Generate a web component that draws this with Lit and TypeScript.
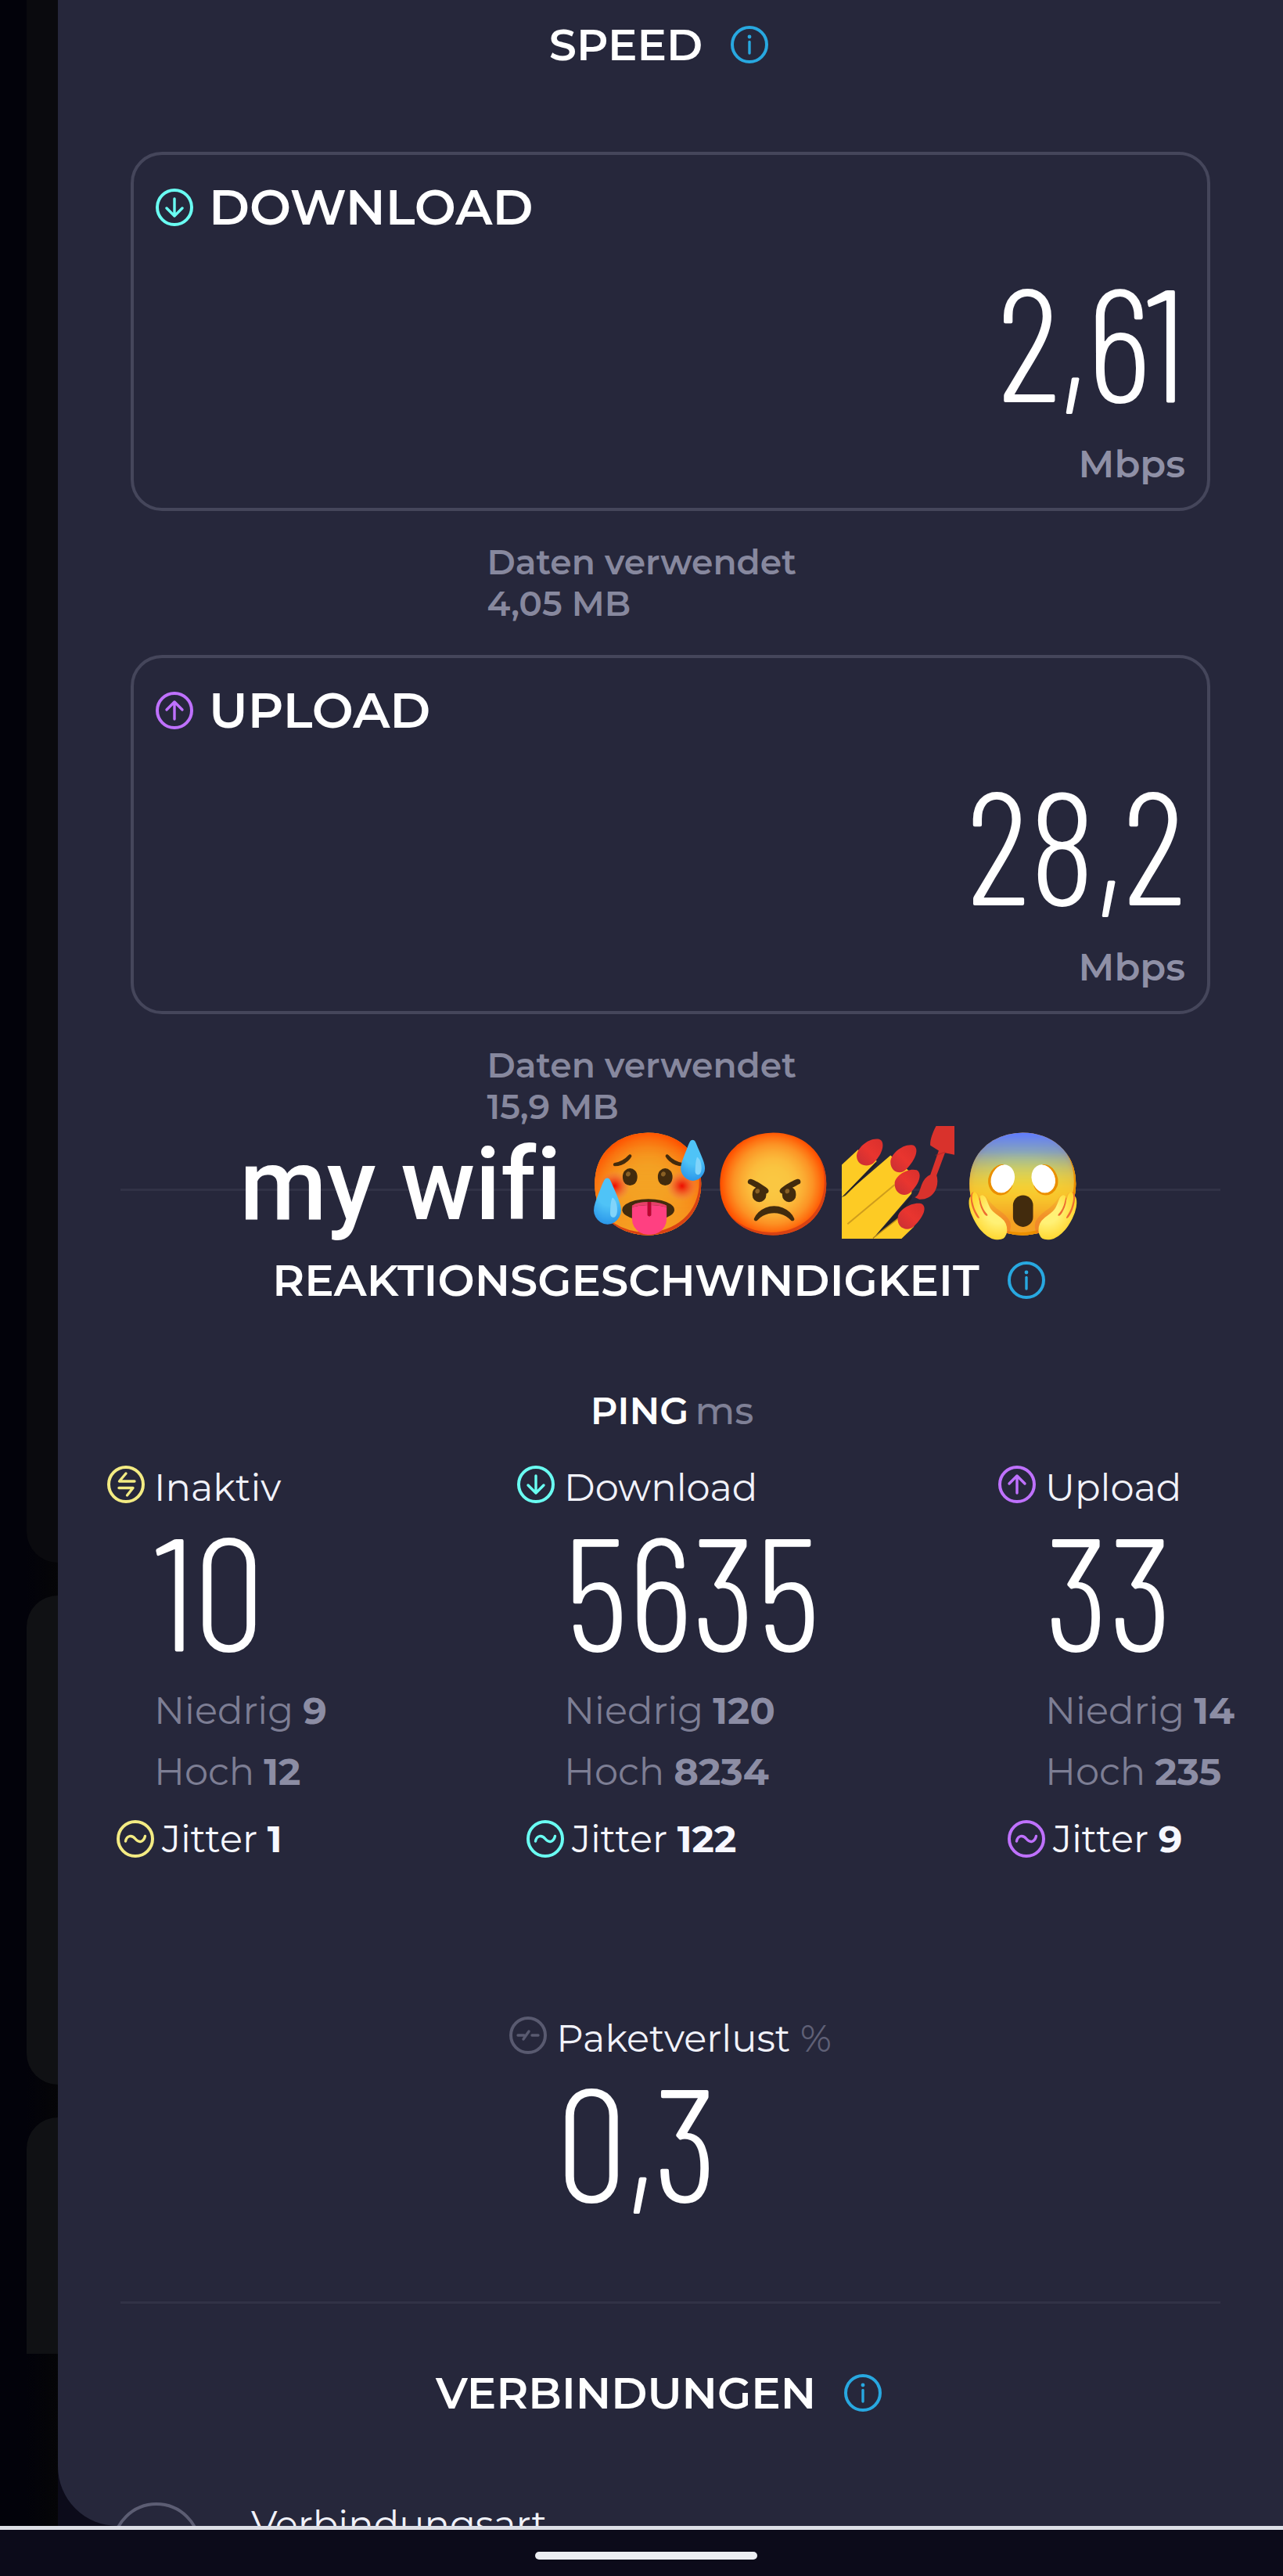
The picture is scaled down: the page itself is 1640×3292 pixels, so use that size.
import { LitElement, html, svg, css, nothing } from "lit";
import { customElement, property } from "lit/decorators.js";
import { classMap } from "lit/directives/class-map.js";

type Tone = "idle" | "down" | "up" | "muted" | "info";

const glyphs = {
  down: svg`<path d="M24 13V35M14 25L24 35L34 25" />`,
  up: svg`<path d="M24 35V13M14 23L24 13L34 23" />`,
  idle: svg`<path d="M24 10L15.5 20H35M15 28.5H33L25.5 38" />`,
  jitter: svg`<path d="M11.500 27C13 19.500 19.500 18.500 24 24S34.500 28.500 36.500 20.500" />`,
  loss: svg`<path d="M11 24H19M18 29L25 19M29 24H37" />`,
  info: svg`<path d="M24 20.500V35" /><circle class="dot" cx="24" cy="14" r="2.400" />`,
};

@customElement("ring-icon")
class RingIcon extends LitElement {
  static styles = css`
    :host { display: block; flex: none; width: 48px; height: 48px; }
    svg { display: block; width: 100%; height: 100%; fill: none; stroke-width: 3.4; stroke-linecap: round; stroke-linejoin: round; }
    .ring { stroke-width: 4; }
    .dot { stroke: none; }
    .idle { stroke: #f3eb83; }
    .down { stroke: #6afff3; }
    .up { stroke: #bf71ff; }
    .muted { stroke: #595a70; }
    .info { stroke: #28a8e0; fill: none; }
    .info .dot { fill: #28a8e0; }
  `;
  @property() glyph: keyof typeof glyphs = "info";
  @property() tone: Tone = "info";
  render() {
    return html`<svg viewBox="0 0 48 48" class=${this.tone} aria-hidden="true">
      <circle class="ring" cx="24" cy="24" r="22" />${glyphs[this.glyph]}
    </svg>`;
  }
}

@customElement("section-title")
class SectionTitle extends LitElement {
  static styles = css`
    :host { display: flex; align-items: center; justify-content: center; gap: 36px; padding-right: 30px; }
    h2 { margin: 0; font-size: 56px; line-height: 64px; font-weight: 600; }
    button { padding: 0; border: 0; background: none; border-radius: 50%; cursor: pointer; }
  `;
  @property() label = "";
  render() {
    return html`<h2>${this.label}</h2>
      <button type="button" aria-label="Info ${this.label}"><ring-icon glyph="info" tone="info"></ring-icon></button>`;
  }
}

@customElement("speed-card")
class SpeedCard extends LitElement {
  static styles = css`
    :host { display: block; margin: 0 93px; }
    .card { border: 4px solid #45465b; border-radius: 40px; padding: 31px 28px 28px; display: flex; flex-direction: column; gap: 32px; }
    .head { display: flex; align-items: center; gap: 20px; }
    h3 { margin: 0; font-size: 63px; line-height: 72px; font-weight: 600; }
    .value { font-family: "Barlow Condensed", "Open Sans Condensed Light", "Roboto", sans-serif; font-weight: 300; font-size: 204px; line-height: 200px; text-align: right; }
    .unit { font-size: 48px; line-height: 56px; font-weight: 600; color: #8f90a6; text-align: right; }
    .used { margin: 39px 0 0; padding-left: 33%; font-size: 44px; line-height: 53px; font-weight: 600; color: #87889e; }
    .used span { display: block; }
  `;
  @property() label = "";
  @property() glyph: "down" | "up" = "down";
  @property() value = "";
  @property() used = "";
  render() {
    return html`<div class="card">
        <div class="head"><ring-icon glyph=${this.glyph} tone=${this.glyph}></ring-icon><h3>${this.label}</h3></div>
        <div class="value">${this.value}</div>
        <div class="unit">Mbps</div>
      </div>
      <p class="used"><span>Daten verwendet</span><span>${this.used}</span></p>`;
  }
}

interface Ping { tone: "idle" | "down" | "up"; label: string; value: string; low: string; high: string; jitter: string; }

@customElement("ping-stat")
class PingStat extends LitElement {
  static styles = css`
    :host { display: block; font-size: 48px; line-height: 56px; white-space: nowrap; }
    .head { display: flex; gap: 12px; color: #f1f2fa; }
    .unit { color: #5f6076; }
    .value { padding-left: 60px; font-family: "Barlow Condensed", "Open Sans Condensed Light", "Roboto", sans-serif; font-weight: 300; font-size: 204px; line-height: 200px; }
    dl { margin: 18px 0 0; padding-left: 60px; color: #7d7e94; line-height: 78px; }
    dl div { display: flex; gap: 12px; }
    dt, dd { margin: 0; }
    dd { font-weight: 700; color: #8c8da4; }
    .jitter { display: flex; align-items: center; gap: 10px; margin-top: 19px; padding-left: 12px; color: #f6f7ff; }
    b { font-weight: 700; }
  `;
  @property() glyph: keyof typeof glyphs = "idle";
  @property() tone: Tone = "idle";
  @property() label = "";
  @property() unit = "";
  @property() value = "";
  @property({ attribute: false }) ping?: Ping;
  render() {
    const p = this.ping;
    return html`<div class="head"><ring-icon glyph=${this.glyph} tone=${this.tone}></ring-icon>
        <span>${this.label}${this.unit ? html` <span class="unit">${this.unit}</span>` : nothing}</span></div>
      <div class="value">${this.value}</div>
      ${p ? html`<dl><div><dt>Niedrig</dt><dd>${p.low}</dd></div><div><dt>Hoch</dt><dd>${p.high}</dd></div></dl>
        <div class="jitter"><ring-icon glyph="jitter" tone=${p.tone}></ring-icon><span>Jitter <b>${p.jitter}</b></span></div>` : nothing}`;
  }
}

@customElement("nail-polish")
class NailPolish extends LitElement {
  static styles = css`
    :host { display: inline-block; width: 144px; height: 144px; margin: 0 8px; vertical-align: -25px; }
    svg { display: block; width: 100%; height: 100%; }
  `;
  render() {
    return html`<svg viewBox="46 34 430 430" role="img" aria-label="Nagellack">
      <defs>
        <linearGradient id="n" x1="0" y1="1" x2="1" y2="0"><stop offset="0" stop-color="#c62f35" /><stop offset=".5" stop-color="#e9352f" /><stop offset="1" stop-color="#d92f2c" /></linearGradient>
      </defs>
      <path fill="#fdcb24" d="M46 182L108 124L180 168L46 306Z" />
      <path fill="#fdcb24" d="M46 306L232 146L320 220L312 292L185 440L165 464H46Z" />
      <path fill="#fdcb24" d="M165 464L262 384L322 418L274 464Z" />
      <path fill="#1f1d24" d="M46 306L176 172L180 180L60 300Z" opacity=".8" />
      <path fill="#1f1d24" d="M178 450L316 296L312 312L258 388Z" opacity=".75" />
      <path d="M68 408L248 258" stroke="#cf9d1c" stroke-width="6" fill="none" />
      <path d="M165 462L262 386" stroke="#b98a17" stroke-width="4" fill="none" />
      <g fill="url(#n)">
        <path d="M103 152C100 120 150 76 188 84C214 92 204 140 168 174C150 192 106 188 103 152Z" />
        <path d="M232 172C232 140 282 98 320 108C342 120 330 160 292 200C272 222 232 210 232 172Z" />
        <path d="M248 252C248 226 296 192 332 202C354 214 344 254 308 288C284 308 246 292 248 252Z" />
        <path d="M260 382C262 354 314 322 350 330C372 342 362 376 322 416C298 440 254 424 260 382Z" />
      </g>
      <path fill="#d9322c" d="M406 34H476V144L440 136L408 222C420 260 400 316 342 314L324 306C352 296 340 240 384 220L416 128L384 108C382 90 392 60 406 34Z" />
      <path d="M404 146L440 134" stroke="#a92626" stroke-width="4" opacity=".5" />
    </svg>`;
  }
}

const pings: Ping[] = [
  { tone: "idle", label: "Inaktiv", value: "10", low: "9", high: "12", jitter: "1" },
  { tone: "down", label: "Download", value: "5635", low: "120", high: "8234", jitter: "122" },
  { tone: "up", label: "Upload", value: "33", low: "14", high: "235", jitter: "9" },
];

@customElement("app-root")
class AppRoot extends LitElement {
  static styles = css`
    :host { display: flex; flex-direction: column; height: 100vh; overflow: hidden; background: #0c0b1a; color: #fff; font-family: "Montserrat", "Inter", sans-serif; font-size: 48px; }
    * { box-sizing: border-box; }
    .stage { flex: 1; min-height: 0; display: grid; grid-template-columns: 74px 1fr; grid-template-rows: 100%; overflow: hidden; border-bottom: 5px solid #dcdee6; }
    .rail { display: flex; flex-direction: column; gap: 42px; padding: 0 0 220px 34px; background: linear-gradient(90deg, #02020a 0 45%, #050507); }
    .ghost { background: #101114; border-radius: 40px 0 0 40px; }
    .ghost.first { flex: 1998; background: #0a0a0e; border-top-left-radius: 0; }
    .ghost.second { flex: 625; }
    .ghost.third { flex: 302; border-bottom-left-radius: 0; }
    .panel { background: #26273b; border-bottom-left-radius: 76px; padding-top: 25px; overflow: hidden; min-width: 0; }
    .cards { display: flex; flex-direction: column; gap: 39px; margin: 105px 0 78px; }
    .rule { position: relative; margin: 0 80px; height: 3px; background: #313246; }
    .caption { position: absolute; inset: -85px 0 auto; margin: 0; padding-right: 20px; text-align: center; white-space: nowrap; font-family: "Roboto", "Noto Color Emoji", sans-serif; font-size: 128px; line-height: 160px; font-weight: 500; font-variant-ligatures: none; }
    section-title { margin-top: 82px; }
    .first-title { margin-top: 0; }
    .ping { display: flex; justify-content: center; gap: 8px; margin: 107px 0 42px; padding-left: 4px; line-height: 56px; font-size: 48px; font-weight: 600; }
    .ping span { color: #7f8096; font-weight: 500; }
    .stats { display: grid; grid-template-columns: 524fr 615fr 303fr; padding: 0 61px 0 63px; }
    .loss { display: flex; justify-content: center; margin: 199px 0 108px; }
    .row { display: flex; gap: 64px; padding: 0 69px; margin-top: 108px; line-height: 56px; color: #f1f2fa; }
    .bubble { flex: none; width: 114px; height: 114px; border: 4px solid #5c5d73; border-radius: 50%; }
    .nav { flex: none; height: 59px; display: flex; justify-content: center; align-items: center; padding: 7px 0 0 12px; }
    .home { width: 284px; height: 10px; padding: 0; border: 0; border-radius: 5px; background: #eceef3; }
  `;
  render() {
    return html`
      <div class="stage">
        <div class="rail" aria-hidden="true">
          ${["first", "second", "third"].map(n => html`<div class=${classMap({ ghost: true, [n]: true })}></div>`)}
        </div>
        <main class="panel">
          <section-title class="first-title" label="SPEED"></section-title>
          <div class="cards">
            <speed-card label="DOWNLOAD" glyph="down" value="2,61" used="4,05 MB"></speed-card>
            <speed-card label="UPLOAD" glyph="up" value="28,2" used="15,9 MB"></speed-card>
          </div>
          <div class="rule"><p class="caption">my wifi 🥵😡<nail-polish></nail-polish>😱</p></div>
          <section-title label="REAKTIONSGESCHWINDIGKEIT"></section-title>
          <div class="ping">PING<span>ms</span></div>
          <div class="stats">
            ${pings.map(p => html`<ping-stat glyph=${p.tone} tone=${p.tone} label=${p.label} value=${p.value} .ping=${p}></ping-stat>`)}
          </div>
          <div class="loss"><ping-stat glyph="loss" tone="muted" label="Paketverlust" unit="%" value="0,3"></ping-stat></div>
          <div class="rule"></div>
          <section-title label="VERBINDUNGEN"></section-title>
          <div class="row"><div class="bubble"></div><div>Verbindungsart</div></div>
        </main>
      </div>
      <nav class="nav"><button class="home" type="button" aria-label="Startbildschirm"></button></nav>
    `;
  }
}
